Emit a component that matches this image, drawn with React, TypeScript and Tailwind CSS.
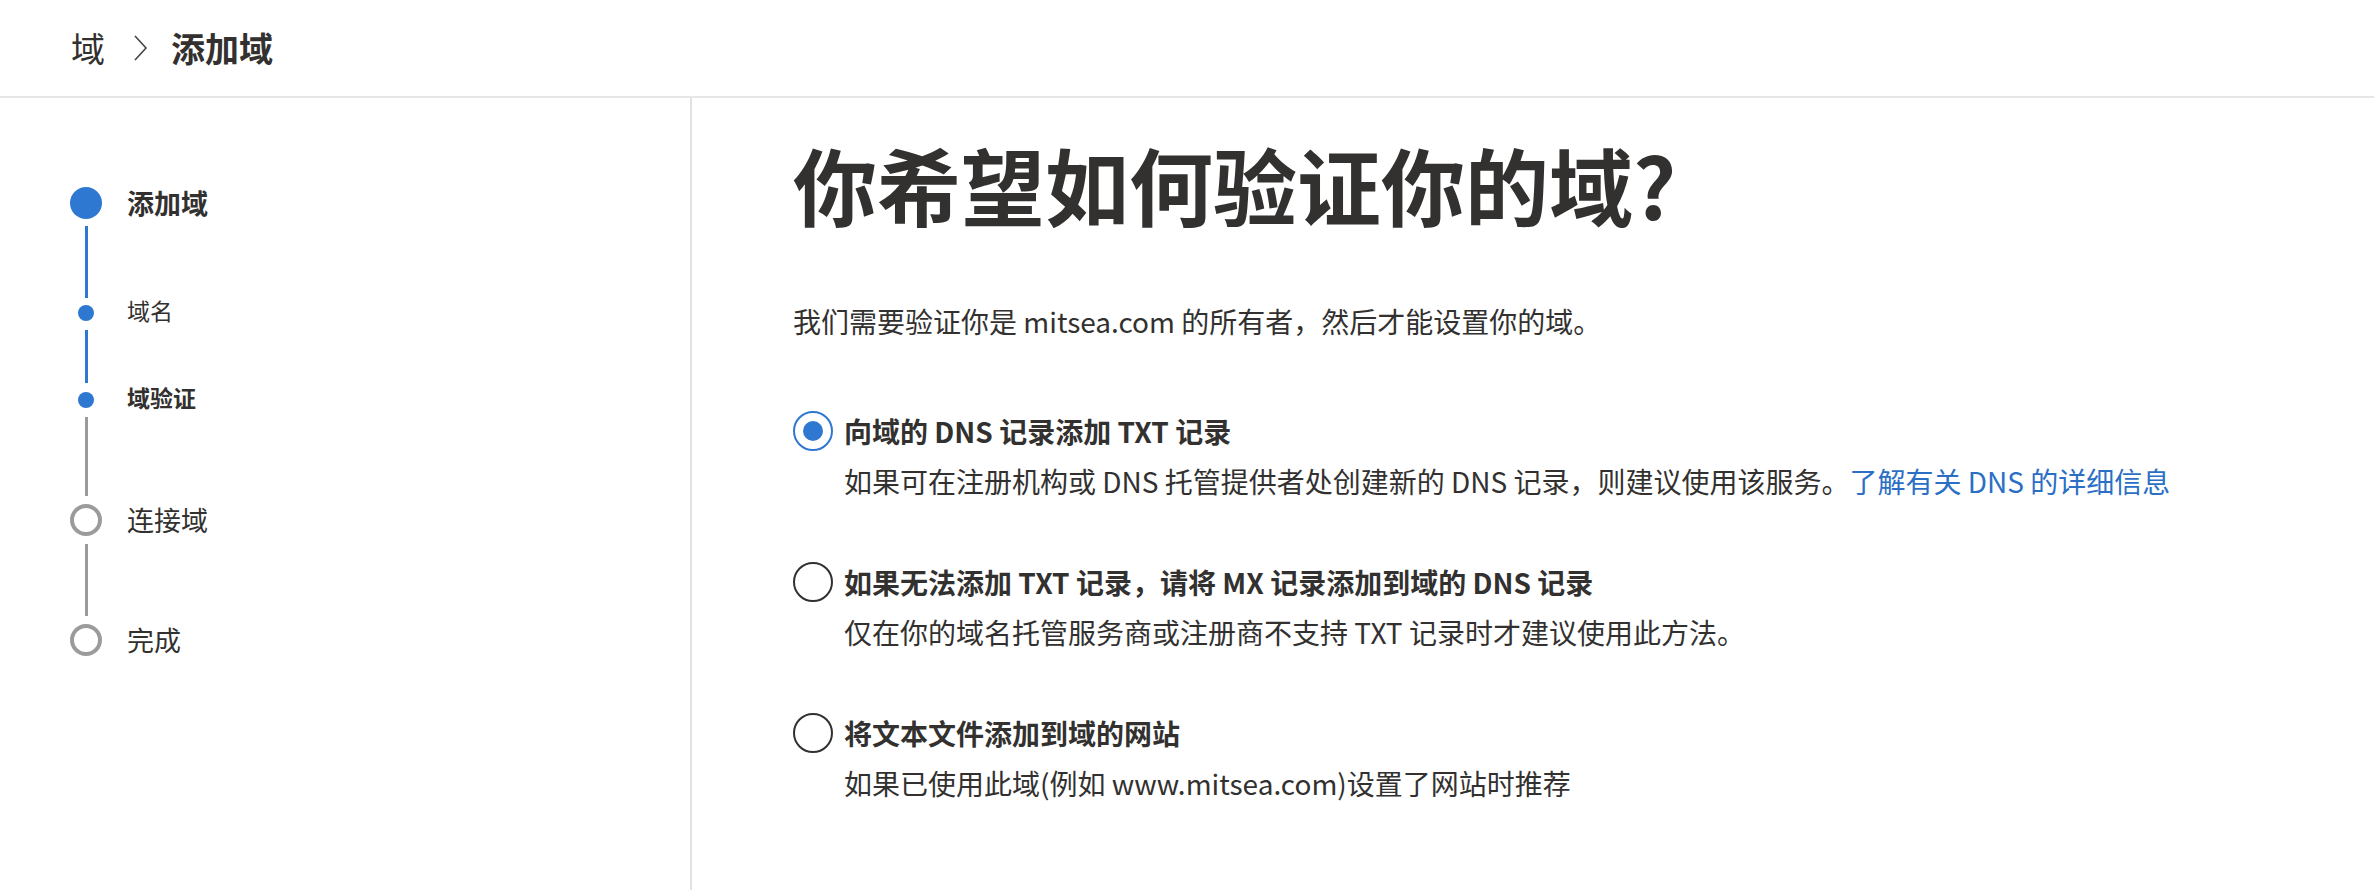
import { ReactNode } from "react";

type Step = {
  label: string;
  kind: "done" | "sub" | "todo";
  bold?: boolean;
};

const FONT = "font-['Noto_Sans_CJK_SC',sans-serif]";

function Connector({ color, height, top, bottom }: { color: string; height: string; top: string; bottom: string }) {
  return (
    <div className={`flex w-8 justify-center ${top} ${bottom}`}>
      <div className={`w-[3px] ${height} ${color}`} />
    </div>
  );
}

function StepRow({ indicator, size, children }: { indicator: ReactNode; size: string; children: ReactNode }) {
  return (
    <div className={`flex items-center ${size}`}>
      <div className="flex w-8 justify-center">{indicator}</div>
      <div className="ml-[25px] whitespace-nowrap">{children}</div>
    </div>
  );
}

function Radio({ checked }: { checked?: boolean }) {
  if (checked) {
    return (
      <span className="flex h-10 w-10 shrink-0 items-center justify-center rounded-full border-2 border-[#2f78d2]">
        <span className="h-5 w-5 rounded-full bg-[#2f78d2]" />
      </span>
    );
  }
  return <span className="h-10 w-10 shrink-0 rounded-full border-2 border-[#323130]" />;
}

function Option({ checked, title, children }: { checked?: boolean; title: string; children: ReactNode }) {
  return (
    <div>
      <label className="flex items-center gap-[11px]">
        <Radio checked={checked} />
        <span className="text-[28px] leading-[40px] font-semibold">{title}</span>
      </label>
      <p className="mt-[10px] pl-[51px] text-[28px] leading-[40px]">{children}</p>
    </div>
  );
}

export default function App() {
  const steps: Step[] = [
    { label: "添加域", kind: "done", bold: true },
    { label: "域名", kind: "sub" },
    { label: "域验证", kind: "sub", bold: true },
    { label: "连接域", kind: "todo" },
    { label: "完成", kind: "todo" },
  ];

  return (
    <div className={`flex min-h-screen flex-col bg-white text-[#323130] ${FONT}`}>
      <header className="flex h-[98px] items-center border-b-2 border-[#e6e6e6] pl-[71px]">
        <span className="text-[34px] leading-none">域</span>
        <svg className="ml-[28px] h-[28px] w-[15px]" viewBox="0 0 15 28" fill="none">
          <path d="M2 2 L13 14 L2 26" stroke="#444" strokeWidth="1.6" />
        </svg>
        <span className="ml-[23px] text-[34px] leading-none font-bold">添加域</span>
      </header>

      <div className="flex flex-1">
        <aside className="w-[692px] shrink-0 border-r-2 border-[#e1e1e1] pl-[70px] pt-[89px]">
          <StepRow size="h-8" indicator={<span className="h-8 w-8 rounded-full bg-[#2f78d2]" />}>
            <span className="text-[27px] leading-8 font-bold">{steps[0].label}</span>
          </StepRow>
          <Connector color="bg-[#2f78d2]" height="h-[72px]" top="pt-[7px]" bottom="pb-[7px]" />
          <StepRow size="h-4" indicator={<span className="h-4 w-4 rounded-full bg-[#2f78d2]" />}>
            <span className="text-[23px] leading-4">{steps[1].label}</span>
          </StepRow>
          <Connector color="bg-[#2f78d2]" height="h-[53px]" top="pt-[9px]" bottom="pb-[9px]" />
          <StepRow size="h-4" indicator={<span className="h-4 w-4 rounded-full bg-[#2f78d2]" />}>
            <span className="text-[23px] leading-4 font-bold">{steps[2].label}</span>
          </StepRow>
          <Connector color="bg-[#9b9b9b]" height="h-[79px]" top="pt-[9px]" bottom="pb-[8px]" />
          <StepRow size="h-8" indicator={<span className="h-8 w-8 rounded-full border-[4px] border-[#9b9b9b]" />}>
            <span className="text-[27px] leading-8">{steps[3].label}</span>
          </StepRow>
          <Connector color="bg-[#9b9b9b]" height="h-[72px]" top="pt-[8px]" bottom="pb-[8px]" />
          <StepRow size="h-8" indicator={<span className="h-8 w-8 rounded-full border-[4px] border-[#9b9b9b]" />}>
            <span className="text-[27px] leading-8">{steps[4].label}</span>
          </StepRow>
        </aside>

        <main className="flex-1 pl-[101px] pt-[36px]">
          <h1 className="text-[84px] leading-[100px] font-bold">你希望如何验证你的域?</h1>
          <p className="mt-[67px] text-[28px] leading-[40px]">
            我们需要验证你是 mitsea.com 的所有者，然后才能设置你的域。
          </p>

          <div className="mt-[70px] flex flex-col gap-[61px]">
            <Option checked title="向域的 DNS 记录添加 TXT 记录">
              如果可在注册机构或 DNS 托管提供者处创建新的 DNS 记录，则建议使用该服务。
              <a className="text-[#2b6fc5]">了解有关 DNS 的详细信息</a>
            </Option>
            <Option title="如果无法添加 TXT 记录，请将 MX 记录添加到域的 DNS 记录">
              仅在你的域名托管服务商或注册商不支持 TXT 记录时才建议使用此方法。
            </Option>
            <Option title="将文本文件添加到域的网站">
              如果已使用此域(例如 www.mitsea.com)设置了网站时推荐
            </Option>
          </div>
        </main>
      </div>
    </div>
  );
}
